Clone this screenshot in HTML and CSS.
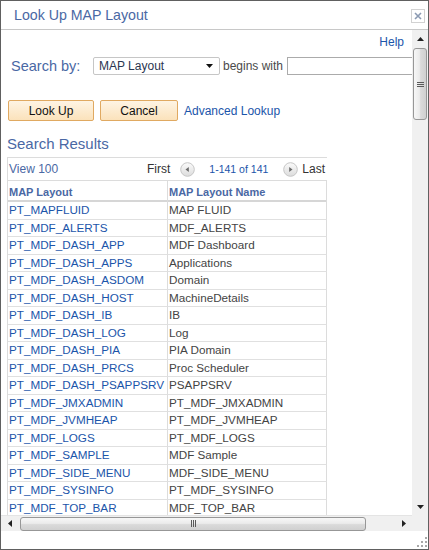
FILE: index.html
```html
<!DOCTYPE html>
<html lang="en">
<head>
<meta charset="utf-8">
<title>Look Up MAP Layout</title>
<link rel="stylesheet" href="styles.css">
</head>
<body>
<div class="dialog">
  <div class="titlebar">
    <span class="title">Look Up MAP Layout</span>
    <span class="close" title="Close">
      <svg width="8" height="8" viewBox="0 0 8 8"><path d="M1 1L7 7M7 1L1 7" stroke="#8b9ab2" stroke-width="1.6" fill="none"/></svg>
    </span>
  </div>
  <div class="main">
    <div class="viewport">
      <div class="content">
        <div class="help-row"><a class="link" href="#">Help</a></div>
        <div class="search-row">
          <span class="label">Search by:</span>
          <div class="select">
            <span class="select-text">MAP Layout</span>
            <svg width="7" height="4" viewBox="0 0 7 4"><path d="M0 0H7L3.5 4Z" fill="#111"/></svg>
          </div>
          <span class="begins">begins with</span>
          <div class="input"></div>
        </div>
        <div class="btn-row">
          <button class="btn btn-lookup">Look Up</button>
          <button class="btn btn-cancel">Cancel</button>
          <a class="link adv" href="#">Advanced Lookup</a>
        </div>
        <h2 class="section">Search Results</h2>
        <div class="grid">
          <div class="grid-nav">
            <span class="view">View 100</span>
            <div class="pager">
              <span class="pg-first">First</span>
              <svg class="pg-btn pg-prev" width="15" height="15" viewBox="0 0 15 15"><defs><linearGradient id="g1" x1="0" y1="0" x2="0" y2="1"><stop offset="0" stop-color="#fbfbfb"/><stop offset="1" stop-color="#dcdcdc"/></linearGradient></defs><circle cx="7.5" cy="7.5" r="6.8" fill="url(#g1)" stroke="#c6c6c6"/><path d="M5.5 7.5L8.8 5V10Z" fill="#6b6b6b"/></svg>
              <span class="pg-count">1-141 of 141</span>
              <svg class="pg-btn pg-next" width="15" height="15" viewBox="0 0 15 15"><defs><linearGradient id="g2" x1="0" y1="0" x2="0" y2="1"><stop offset="0" stop-color="#fbfbfb"/><stop offset="1" stop-color="#dcdcdc"/></linearGradient></defs><circle cx="7.5" cy="7.5" r="6.8" fill="url(#g2)" stroke="#c6c6c6"/><path d="M9.5 7.5L6.2 5V10Z" fill="#6b6b6b"/></svg>
              <span class="pg-last">Last</span>
            </div>
          </div>
          <div class="grid-head">
            <div class="hcell">MAP Layout</div>
            <div class="hcell">MAP Layout Name</div>
          </div>
          <div class="row"><a class="cell link" href="#">PT_MAPFLUID</a><span class="cell">MAP FLUID</span></div>
          <div class="row"><a class="cell link" href="#">PT_MDF_ALERTS</a><span class="cell">MDF_ALERTS</span></div>
          <div class="row"><a class="cell link" href="#">PT_MDF_DASH_APP</a><span class="cell">MDF Dashboard</span></div>
          <div class="row"><a class="cell link" href="#">PT_MDF_DASH_APPS</a><span class="cell">Applications</span></div>
          <div class="row"><a class="cell link" href="#">PT_MDF_DASH_ASDOM</a><span class="cell">Domain</span></div>
          <div class="row"><a class="cell link" href="#">PT_MDF_DASH_HOST</a><span class="cell">MachineDetails</span></div>
          <div class="row"><a class="cell link" href="#">PT_MDF_DASH_IB</a><span class="cell">IB</span></div>
          <div class="row"><a class="cell link" href="#">PT_MDF_DASH_LOG</a><span class="cell">Log</span></div>
          <div class="row"><a class="cell link" href="#">PT_MDF_DASH_PIA</a><span class="cell">PIA Domain</span></div>
          <div class="row"><a class="cell link" href="#">PT_MDF_DASH_PRCS</a><span class="cell">Proc Scheduler</span></div>
          <div class="row"><a class="cell link" href="#">PT_MDF_DASH_PSAPPSRV</a><span class="cell">PSAPPSRV</span></div>
          <div class="row"><a class="cell link" href="#">PT_MDF_JMXADMIN</a><span class="cell">PT_MDF_JMXADMIN</span></div>
          <div class="row"><a class="cell link" href="#">PT_MDF_JVMHEAP</a><span class="cell">PT_MDF_JVMHEAP</span></div>
          <div class="row"><a class="cell link" href="#">PT_MDF_LOGS</a><span class="cell">PT_MDF_LOGS</span></div>
          <div class="row"><a class="cell link" href="#">PT_MDF_SAMPLE</a><span class="cell">MDF Sample</span></div>
          <div class="row"><a class="cell link" href="#">PT_MDF_SIDE_MENU</a><span class="cell">MDF_SIDE_MENU</span></div>
          <div class="row"><a class="cell link" href="#">PT_MDF_SYSINFO</a><span class="cell">PT_MDF_SYSINFO</span></div>
          <div class="row"><a class="cell link" href="#">PT_MDF_TOP_BAR</a><span class="cell">MDF_TOP_BAR</span></div>
        </div>
      </div>
    </div>
    <div class="vscroll">
      <div class="sb-btn"><svg width="7" height="4" viewBox="0 0 7 4"><path d="M3.5 0L7 4H0Z" fill="#222"/></svg></div>
      <div class="vthumb"><svg width="7" height="7" viewBox="0 0 7 7"><path d="M0 1.5H7M0 3.5H7M0 5.5H7" stroke="#5a5a5a" stroke-width="1"/></svg></div>
      <div class="vtrack"></div>
      <div class="sb-btn"><svg width="7" height="4" viewBox="0 0 7 4"><path d="M0 0H7L3.5 4Z" fill="#222"/></svg></div>
    </div>
  </div>
  <div class="hscroll-row">
    <div class="hscroll">
      <div class="sb-hbtn"><svg width="4" height="7" viewBox="0 0 4 7"><path d="M0 3.5L4 0V7Z" fill="#222"/></svg></div>
      <div class="hthumb"><svg width="7" height="7" viewBox="0 0 7 7"><path d="M1.5 0V7M3.5 0V7M5.5 0V7" stroke="#5a5a5a" stroke-width="1"/></svg></div>
      <div class="htrack"></div>
      <div class="sb-hbtn"><svg width="4" height="7" viewBox="0 0 4 7"><path d="M4 3.5L0 0V7Z" fill="#222"/></svg></div>
    </div>
    <div class="corner"></div>
  </div>
  <div class="footer">
    <svg class="grip" width="11" height="11" viewBox="0 0 11 11"><g fill="#a8a8a8"><rect x="8" y="0" width="2" height="2"/><rect x="4" y="4" width="2" height="2"/><rect x="8" y="4" width="2" height="2"/><rect x="0" y="8" width="2" height="2"/><rect x="4" y="8" width="2" height="2"/><rect x="8" y="8" width="2" height="2"/></g></svg>
  </div>
</div>
</body>
</html>
```

FILE: styles.css
```css
* { box-sizing: border-box; }
html, body { margin: 0; padding: 0; background: #fff; }
body { font-family: "Liberation Sans", Arial, sans-serif; }

.dialog {
  width: 429px;
  height: 550px;
  border: 1px solid #606060;
  display: flex;
  flex-direction: column;
  background: #fff;
  overflow: hidden;
}

.titlebar {
  height: 29px;
  flex: none;
  border-bottom: 1px solid #c8c8c8;
  display: flex;
  align-items: center;
  padding-left: 13px;
  padding-right: 3px;
}
.title { flex: 1; font-size: 14.2px; line-height: 28px; color: #4a68a4; }
.close {
  width: 14px;
  height: 14px;
  margin-top: 1px;
  border: 1px solid #d2d2d2;
  display: flex;
  align-items: center;
  justify-content: center;
}

.main { display: flex; height: 485px; flex: none; }
.viewport { width: 411px; flex: none; overflow: hidden; }
.content { padding-top: 5px; }

.link { color: #1b55aa; text-decoration: none; }

.help-row {
  height: 14px;
  font-size: 12px;
  line-height: 14px;
  text-align: right;
  padding-right: 8px;
}

.search-row {
  margin-top: 8px;
  height: 18px;
  display: flex;
  align-items: center;
  padding-left: 10px;
}
.label {
  width: 82px;
  flex: none;
  font-size: 14.5px;
  color: #4a68a4;
  white-space: nowrap;
}
.select {
  width: 127px;
  height: 18px;
  flex: none;
  border: 1px solid #c6c6c6;
  border-radius: 2px;
  display: flex;
  align-items: center;
  justify-content: space-between;
  padding: 0 6px 0 5px;
  font-size: 12px;
  color: #2b3650;
}
.begins {
  margin-left: 3px;
  flex: none;
  font-size: 12px;
  color: #4a4a4a;
  white-space: nowrap;
}
.input {
  margin-left: 4px;
  width: 150px;
  height: 18px;
  flex: none;
  border: 1px solid #ababab;
}

.btn-row {
  margin-top: 25px;
  height: 21px;
  display: flex;
  align-items: center;
  padding-left: 7px;
}
.btn {
  height: 21px;
  border: 1px solid #e0a961;
  border-radius: 2px;
  background: linear-gradient(#fef4e4, #fbe2bb);
  font-family: "Liberation Sans", Arial, sans-serif;
  font-size: 12px;
  color: #111;
  padding: 0;
  flex: none;
}
.btn-lookup { width: 86px; }
.btn-cancel { width: 78px; margin-left: 6px; }
.adv { margin-left: 6px; font-size: 12px; white-space: nowrap; }

.section {
  margin: 14px 0 0;
  padding-left: 6px;
  font-size: 15px;
  line-height: 17px;
  font-weight: normal;
  color: #4a68a4;
}

.grid {
  margin: 5px 0 0 6px;
  width: 320px;
  border-top: 1px solid #dcdcdc;
  border-left: 1px solid #dcdcdc;
}
.grid-nav {
  height: 23px;
  border-bottom: 1px solid #dcdcdc;
  display: flex;
  align-items: center;
  padding: 0 2px 0 1px;
  font-size: 12px;
  white-space: nowrap;
}
.view { color: #4a68a4; }
.pager { margin-left: auto; display: flex; align-items: center; }
.pg-first, .pg-last { color: #333; }
.pg-prev { margin-left: 10px; }
.pg-count { margin-left: 14px; font-size: 10.5px; color: #1b55aa; }
.pg-next { margin-left: 15px; }
.pg-last { margin-left: 4px; }

.grid-head {
  height: 21px;
  display: grid;
  grid-template-columns: 160px 159px;
  border-bottom: 2px solid #d6d6d6;
}
.hcell {
  border-right: 1px solid #dcdcdc;
  font-size: 11px;
  font-weight: bold;
  color: #4a68a4;
  line-height: 20px;
  padding: 1px 0 0 1px;
  white-space: nowrap;
}

.row {
  height: 17.5px;
  display: grid;
  grid-template-columns: 160px 159px;
}
.cell {
  display: block;
  border-right: 1px solid #dcdcdc;
  border-bottom: 1px solid #e0e0e0;
  font-size: 11.7px;
  line-height: 16.5px;
  padding-left: 1px;
  white-space: nowrap;
  overflow: hidden;
  color: #444;
}
a.cell { color: #1b55aa; }

/* scrollbars */
.vscroll {
  width: 16px;
  flex: none;
  background: #f0f0f0;
  display: flex;
  flex-direction: column;
  align-items: center;
}
.sb-btn {
  width: 16px;
  height: 17px;
  flex: none;
  display: flex;
  align-items: center;
  justify-content: center;
}
.vthumb {
  width: 14px;
  height: 72px;
  flex: none;
  margin-top: 1px;
  border: 1px solid #979797;
  border-radius: 3px;
  background: linear-gradient(to right, #f7f7f7, #ebebeb 45%, #dadada 55%, #d0d0d0);
  display: flex;
  align-items: center;
  justify-content: center;
}
.vtrack { flex: 1; }

.hscroll-row { display: flex; height: 16px; flex: none; }
.hscroll {
  width: 411px;
  height: 16px;
  flex: none;
  background: #f0f0f0;
  display: flex;
  align-items: center;
  border-top: 1px solid #e4e4e4;
}
.sb-hbtn {
  width: 17px;
  height: 15px;
  flex: none;
  display: flex;
  align-items: center;
  justify-content: center;
}
.hthumb {
  width: 346px;
  height: 14px;
  flex: none;
  margin-left: 2px;
  border: 1px solid #979797;
  border-radius: 3px;
  background: linear-gradient(#f7f7f7, #ebebeb 45%, #dadada 55%, #d0d0d0);
  display: flex;
  align-items: center;
  justify-content: center;
}
.htrack { flex: 1; }
.corner { width: 16px; height: 16px; flex: none; background: #f0f0f0; }

.footer {
  height: 18px;
  flex: none;
  display: flex;
  justify-content: flex-end;
  align-items: flex-end;
  padding: 0 0 1px 0;
}
```
